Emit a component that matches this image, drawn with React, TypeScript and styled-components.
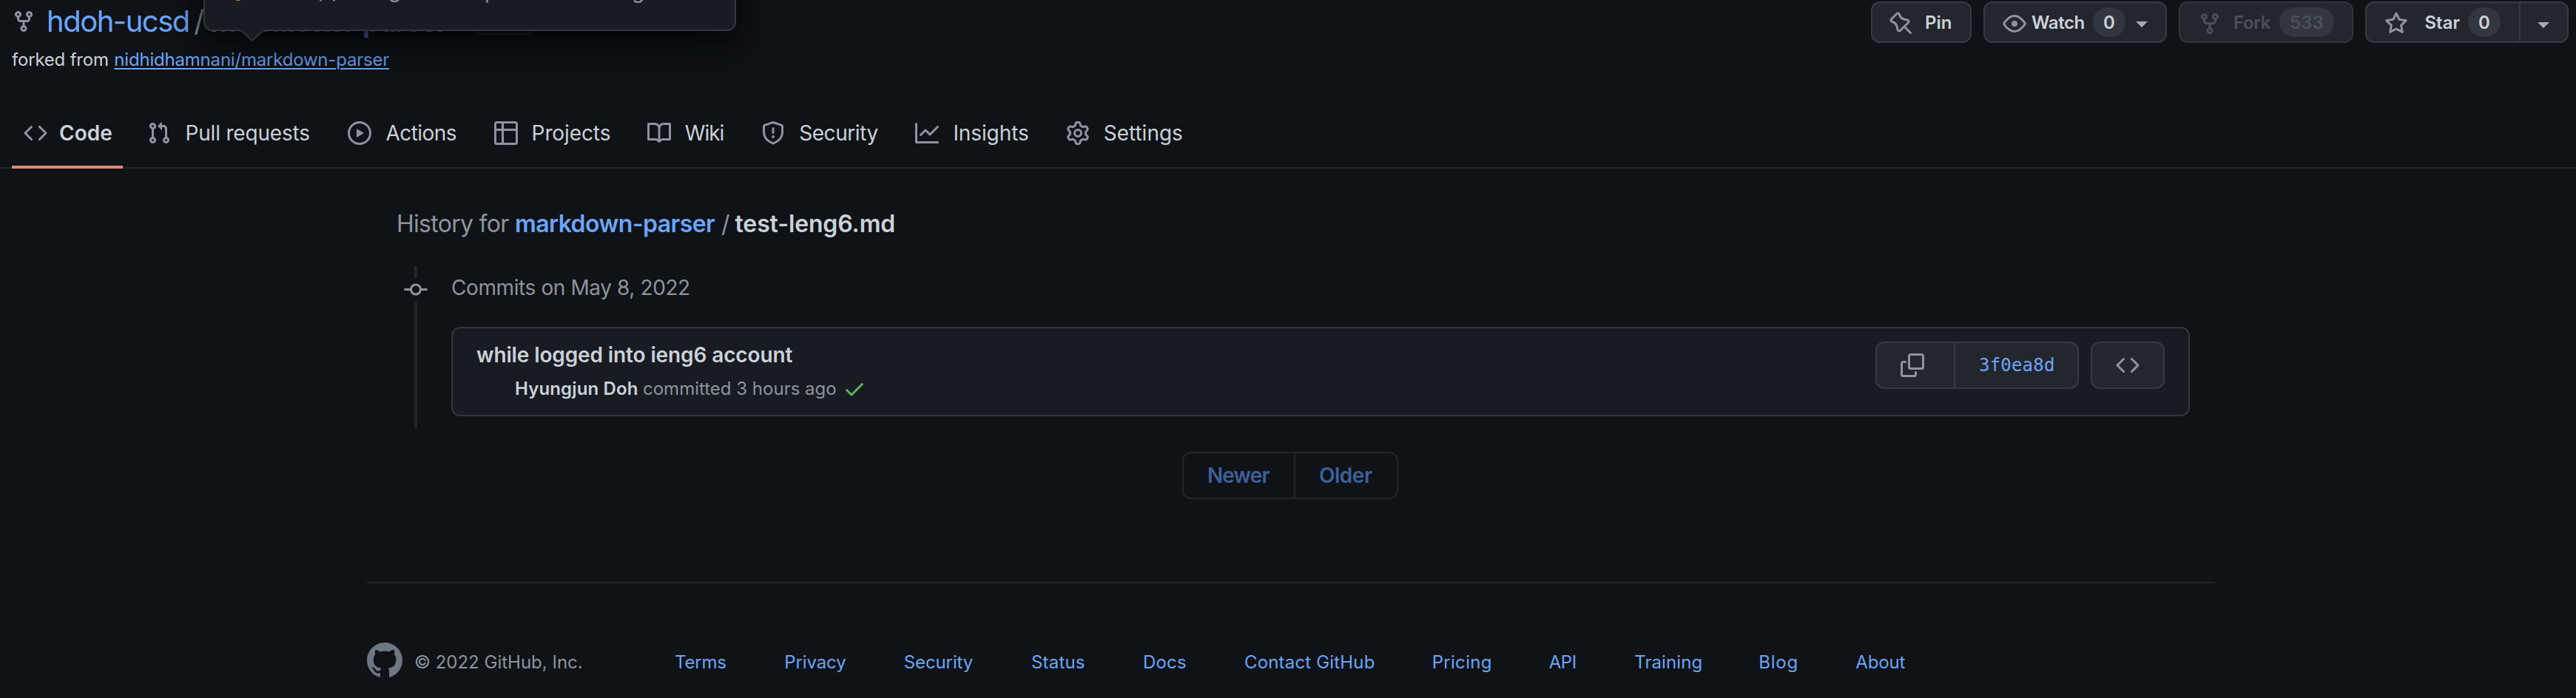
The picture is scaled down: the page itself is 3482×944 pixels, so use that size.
import React from "react";
import styled, { createGlobalStyle } from "styled-components";

const color = {
  canvas: "#0f1216",
  panel: "#181b22",
  button: "#23262d",
  counter: "#32363e",
  border: "#32363b",
  buttonBorder: "#373b41",
  divider: "#22262a",
  text: "#cbd1d8",
  muted: "#8d949e",
  link: "#6ca5f8",
  linkDisabled: "#3e6098",
  disabled: "#4a5058",
  accent: "#e9866c",
  success: "#5bb557",
};

const GlobalStyle = createGlobalStyle`
  body {
    margin: 0;
    background: ${color.canvas};
    color: ${color.text};
    font-family: Inter, "Liberation Sans", sans-serif;
    font-size: 28px;
  }
`;

const icons = {
  fork: "M5 3.25a.75.75 0 11-1.5 0 .75.75 0 011.5 0zm0 2.122a2.25 2.25 0 10-1.5 0v.878A2.25 2.25 0 005.75 8.5h1.5v2.128a2.251 2.251 0 101.5 0V8.5h1.5a2.25 2.25 0 002.25-2.25v-.878a2.25 2.25 0 10-1.5 0v.878a.75.75 0 01-.75.75h-4.5A.75.75 0 015 6.25v-.878zm3.75 7.378a.75.75 0 11-1.5 0 .75.75 0 011.5 0zm3-8.75a.75.75 0 100-1.5.75.75 0 000 1.5z",
  code: "M4.72 3.22a.75.75 0 011.06 1.06L2.06 8l3.72 3.72a.75.75 0 11-1.06 1.06L.47 8.53a.75.75 0 010-1.06l4.25-4.25zm6.56 0a.75.75 0 10-1.06 1.06L13.94 8l-3.72 3.72a.75.75 0 101.06 1.06l4.25-4.25a.75.75 0 000-1.06l-4.25-4.25z",
  pull: "M7.177 3.073L9.573.677A.25.25 0 0110 .854v4.792a.25.25 0 01-.427.177L7.177 3.427a.25.25 0 010-.354zM3.75 2.5a.75.75 0 100 1.5.75.75 0 000-1.5zm-2.25.75a2.25 2.25 0 113 2.122v5.256a2.251 2.251 0 11-1.5 0V5.372A2.25 2.25 0 011.5 3.25zM11 2.5h-1V4h1a1 1 0 011 1v5.628a2.251 2.251 0 101.5 0V5A2.5 2.5 0 0011 2.5zm1 10.25a.75.75 0 111.5 0 .75.75 0 01-1.5 0zM3.75 12a.75.75 0 100 1.5.75.75 0 000-1.5z",
  play: "M1.5 8a6.5 6.5 0 1113 0 6.5 6.5 0 01-13 0zM8 0a8 8 0 100 16A8 8 0 008 0zM6.379 5.227A.25.25 0 006 5.442v5.117a.25.25 0 00.379.214l4.264-2.559a.25.25 0 000-.428L6.379 5.227z",
  table: "M0 1.75C0 .784.784 0 1.75 0h12.5C15.216 0 16 .784 16 1.75v12.5A1.75 1.75 0 0114.25 16H1.75A1.75 1.75 0 010 14.25V1.75zM1.5 6.5v7.75c0 .138.112.25.25.25H5v-8H1.5zM6.5 6.5v8h7.75a.25.25 0 00.25-.25V6.5h-8zM14.5 5V1.75a.25.25 0 00-.25-.25H6.5V5h8zM5 5V1.5H1.75a.25.25 0 00-.25.25V5H5z",
  book: "M0 1.75A.75.75 0 01.75 1h4.253c1.227 0 2.317.59 3 1.501A3.744 3.744 0 0111.006 1h4.245a.75.75 0 01.75.75v10.5a.75.75 0 01-.75.75h-4.507a2.25 2.25 0 00-1.591.659l-.622.621a.75.75 0 01-1.06 0l-.622-.621A2.25 2.25 0 005.258 13H.75a.75.75 0 01-.75-.75V1.75zm8.755 3a2.25 2.25 0 012.25-2.25H14.5v9h-3.757c-.71 0-1.4.201-1.992.572l.004-7.322zm-1.504 7.324l.004-5.073-.002-2.253A2.25 2.25 0 005.003 2.5H1.5v9h3.757a3.75 3.75 0 011.994.574z",
  shield: "M7.467.133a1.75 1.75 0 011.066 0l5.25 1.68A1.75 1.75 0 0115 3.48V7c0 1.566-.32 3.182-1.303 4.682-.983 1.498-2.585 2.813-5.032 3.855a1.7 1.7 0 01-1.33 0c-2.447-1.042-4.049-2.357-5.032-3.855C1.32 10.182 1 8.566 1 7V3.48a1.75 1.75 0 011.217-1.667l5.25-1.68zm.61 1.429a.25.25 0 00-.153 0l-5.25 1.68a.25.25 0 00-.174.238V7c0 1.358.275 2.666 1.057 3.86.784 1.194 2.121 2.34 4.366 3.297a.2.2 0 00.154 0c2.245-.956 3.582-2.104 4.366-3.298C13.225 9.666 13.5 8.36 13.5 7V3.48a.25.25 0 00-.174-.237l-5.25-1.68zM9 10.5a1 1 0 11-2 0 1 1 0 012 0zm-.25-5.75a.75.75 0 10-1.5 0v3a.75.75 0 001.5 0v-3z",
  graph: "M1.5 1.75a.75.75 0 00-1.5 0v12.5c0 .414.336.75.75.75h14.5a.75.75 0 000-1.5H1.5V1.75zm14.28 2.53a.75.75 0 00-1.06-1.06L10 7.94 7.53 5.47a.75.75 0 00-1.06 0L3.22 8.72a.75.75 0 001.06 1.06L7 7.06l2.47 2.47a.75.75 0 001.06 0l5.25-5.25z",
  gear: "M7.429 1.525a6.593 6.593 0 011.142 0c.036.003.108.036.137.146l.289 1.105c.147.56.55.967.997 1.189.174.086.341.183.501.29.417.278.97.423 1.53.27l1.102-.303c.11-.03.175.016.195.046.219.31.41.641.573.989.014.031.022.11-.059.19l-.815.806c-.411.406-.562.957-.53 1.456a4.588 4.588 0 010 .582c-.032.499.119 1.05.53 1.456l.815.806c.08.08.073.159.059.19a6.494 6.494 0 01-.573.99c-.02.029-.086.074-.195.045l-1.103-.303c-.559-.153-1.112-.008-1.529.27-.16.107-.327.204-.5.29-.449.222-.851.628-.998 1.189l-.289 1.105c-.029.11-.101.143-.137.146a6.613 6.613 0 01-1.142 0c-.036-.003-.108-.037-.137-.146l-.289-1.105c-.147-.56-.55-.967-.997-1.189a4.502 4.502 0 01-.501-.29c-.417-.278-.97-.423-1.53-.27l-1.102.303c-.11.03-.175-.016-.195-.046a6.492 6.492 0 01-.573-.989c-.014-.031-.022-.11.059-.19l.815-.806c.411-.406.562-.957.53-1.456a4.587 4.587 0 010-.582c.032-.499-.119-1.05-.53-1.456l-.815-.806c-.08-.08-.073-.159-.059-.19a6.44 6.44 0 01.573-.99c.02-.029.086-.075.195-.045l1.103.303c.559.153 1.112.008 1.529-.27.16-.107.327-.204.5-.29.449-.222.851-.628.998-1.189l.289-1.105c.029-.11.101-.143.137-.146zM8 0c-.236 0-.47.01-.701.03-.743.065-1.29.615-1.458 1.261l-.29 1.106c-.017.066-.078.158-.211.224a5.994 5.994 0 00-.668.386c-.123.082-.233.09-.3.071L3.27 2.776c-.644-.177-1.392.02-1.82.63a7.977 7.977 0 00-.704 1.217c-.315.675-.111 1.422.363 1.891l.815.806c.05.048.098.147.088.294a6.084 6.084 0 000 .772c.01.147-.038.246-.088.294l-.815.806c-.474.469-.678 1.216-.363 1.891.2.428.436.835.704 1.218.428.609 1.176.806 1.82.63l1.103-.303c.066-.019.176-.011.299.071.213.143.436.272.668.386.133.066.194.158.212.224l.289 1.106c.169.646.715 1.196 1.458 1.26a8.094 8.094 0 001.402 0c.743-.064 1.29-.614 1.458-1.26l.29-1.106c.017-.066.078-.158.211-.224a5.98 5.98 0 00.668-.386c.123-.082.233-.09.3-.071l1.102.302c.644.177 1.392-.02 1.82-.63.268-.382.505-.789.704-1.217.315-.675.111-1.422-.364-1.891l-.814-.806c-.05-.048-.098-.147-.088-.294a6.1 6.1 0 000-.772c-.01-.147.039-.246.088-.294l.814-.806c.475-.469.679-1.216.364-1.891a7.992 7.992 0 00-.704-1.218c-.428-.609-1.176-.806-1.82-.63l-1.103.303c-.066.019-.176.011-.299-.071a5.991 5.991 0 00-.668-.386c-.133-.066-.194-.158-.212-.224L10.16 1.29C9.99.645 9.444.095 8.701.031A8.094 8.094 0 008 0zm1.5 8a1.5 1.5 0 11-3 0 1.5 1.5 0 013 0zM11 8a3 3 0 11-6 0 3 3 0 016 0z",
  pin: "M4.456.734a1.75 1.75 0 012.826.504l.613 1.327a3.081 3.081 0 002.084 1.707l2.454.584c1.332.317 1.8 1.972.832 2.94L11.06 10l3.72 3.72a.75.75 0 11-1.061 1.06L10 11.06l-2.204 2.205c-.968.968-2.623.5-2.94-.832l-.584-2.454a3.081 3.081 0 00-1.707-2.084l-1.327-.613a1.75 1.75 0 01-.504-2.826L4.456.734zM5.92 1.866a.25.25 0 00-.404-.072L1.794 5.516a.25.25 0 00.072.404l1.328.613A4.582 4.582 0 015.73 9.63l.584 2.454a.25.25 0 00.42.12l5.47-5.47a.25.25 0 00-.12-.42L9.63 5.73a4.581 4.581 0 01-3.098-2.537L5.92 1.866z",
  eye: "M1.679 7.932c.412-.621 1.242-1.75 2.366-2.717C5.175 4.242 6.527 3.5 8 3.5c1.473 0 2.824.742 3.955 1.715 1.124.967 1.954 2.096 2.366 2.717a.119.119 0 010 .136c-.412.621-1.242 1.75-2.366 2.717C10.825 11.758 9.473 12.5 8 12.5c-1.473 0-2.824-.742-3.955-1.715C2.92 9.818 2.09 8.69 1.679 8.068a.119.119 0 010-.136zM8 2c-1.981 0-3.67.992-4.933 2.078C1.797 5.169.88 6.423.43 7.1a1.619 1.619 0 000 1.798c.45.678 1.367 1.932 2.637 3.024C4.329 13.008 6.019 14 8 14c1.981 0 3.67-.992 4.933-2.078 1.27-1.091 2.187-2.345 2.637-3.023a1.619 1.619 0 000-1.798c-.45-.678-1.367-1.932-2.637-3.023C11.671 2.992 9.981 2 8 2zm0 8a2 2 0 100-4 2 2 0 000 4z",
  star: "M8 .25a.75.75 0 01.673.418l1.882 3.815 4.21.612a.75.75 0 01.416 1.279l-3.046 2.97.719 4.192a.75.75 0 01-1.088.791L8 12.347l-3.766 1.98a.75.75 0 01-1.088-.79l.72-4.194L.818 6.374a.75.75 0 01.416-1.28l4.21-.611L7.327.668A.75.75 0 018 .25zm0 2.445L6.615 5.5a.75.75 0 01-.564.41l-3.097.45 2.24 2.184a.75.75 0 01.216.664l-.528 3.084 2.769-1.456a.75.75 0 01.698 0l2.77 1.456-.53-3.084a.75.75 0 01.216-.664l2.24-2.183-3.096-.45a.75.75 0 01-.564-.41L8 2.694v.001z",
  copy: "M0 6.75C0 5.784.784 5 1.75 5h1.5a.75.75 0 010 1.5h-1.5a.25.25 0 00-.25.25v7.5c0 .138.112.25.25.25h7.5a.25.25 0 00.25-.25v-1.5a.75.75 0 011.5 0v1.5A1.75 1.75 0 019.25 16h-7.5A1.75 1.75 0 010 14.25v-7.5zM5 1.75C5 .784 5.784 0 6.75 0h7.5C15.216 0 16 .784 16 1.75v7.5A1.75 1.75 0 0114.25 11h-7.5A1.75 1.75 0 015 9.25v-7.5zm1.75-.25a.25.25 0 00-.25.25v7.5c0 .138.112.25.25.25h7.5a.25.25 0 00.25-.25v-7.5a.25.25 0 00-.25-.25h-7.5z",
  commit: "M10.5 7.75a2.5 2.5 0 11-5 0 2.5 2.5 0 015 0zm1.43.75a4.002 4.002 0 01-7.86 0H.75a.75.75 0 110-1.5h3.32a4.001 4.001 0 017.86 0h3.32a.75.75 0 110 1.5h-3.32z",
  check: "M13.78 4.22a.75.75 0 010 1.06l-7.25 7.25a.75.75 0 01-1.06 0L2.22 9.28a.75.75 0 011.06-1.06L6 10.94l6.72-6.72a.75.75 0 011.06 0z",
  mark: "M8 0C3.58 0 0 3.58 0 8c0 3.54 2.29 6.53 5.47 7.59.4.07.55-.17.55-.38 0-.19-.01-.82-.01-1.49-2.01.37-2.53-.49-2.69-.94-.09-.23-.48-.94-.82-1.13-.28-.15-.68-.52-.01-.53.63-.01 1.08.58 1.23.82.72 1.21 1.87.87 2.33.66.07-.52.28-.87.51-1.07-1.78-.2-3.64-.89-3.64-3.95 0-.87.31-1.59.82-2.15-.08-.2-.36-1.02.08-2.12 0 0 .67-.21 2.2.82.64-.18 1.32-.27 2-.27.68 0 1.36.09 2 .27 1.53-1.04 2.2-.82 2.2-.82.44 1.1.16 1.92.08 2.12.51.56.82 1.27.82 2.15 0 3.07-1.87 3.75-3.65 3.95.29.25.54.73.54 1.48 0 1.07-.01 1.93-.01 2.2 0 .21.15.46.55.38A8.013 8.013 0 0016 8c0-4.42-3.58-8-8-8z",
};

type IconName = keyof typeof icons;

const Svg = styled.svg<{ $size: number }>`
  flex: none;
  display: block;
  width: ${(p) => p.$size}px;
  height: ${(p) => p.$size}px;
  fill: currentColor;
`;

function Icon({ name, size = 32 }: { name: IconName; size?: number }) {
  return (
    <Svg viewBox="0 0 16 16" $size={size} aria-hidden="true">
      <path fillRule="evenodd" d={icons[name]} />
    </Svg>
  );
}

const Page = styled.div`
  height: 944px;
  overflow: hidden;
`;

/* Repository header */

const Header = styled.header`
  display: flex;
  justify-content: space-between;
  align-items: flex-start;
  padding: 0 10px 0 16px;
  height: 132px;
`;

const TitleRow = styled.div`
  display: flex;
  align-items: center;
  height: 57px;
  font-size: 40px;
  color: ${color.muted};
`;

const Owner = styled.a`
  width: 199px;
  margin-left: 15px;
  color: ${color.link};
  letter-spacing: -1.5px;
  white-space: nowrap;
`;

const Slash = styled.span`
  width: 22px;
`;

const RepoName = styled.a`
  width: 349px;
  color: ${color.link};
  font-weight: 600;
  letter-spacing: -1.9px;
  white-space: nowrap;
`;

const Visibility = styled.span`
  box-sizing: border-box;
  width: 94px;
  height: 40px;
  margin-top: -3px;
  border: 2px solid ${color.border};
  border-radius: 20px;
  color: ${color.muted};
  font-size: 24px;
  font-weight: 500;
  line-height: 34px;
  text-align: center;
`;

const ForkedFrom = styled.div`
  margin: 8px 0 0;
  font-size: 24px;
  line-height: 31px;
  letter-spacing: -0.2px;

  a {
    margin-left: 1px;
    color: ${color.link};
    text-decoration: underline;
    text-decoration-thickness: 2px;
    text-underline-offset: 3px;
  }
`;

const Actions = styled.div`
  display: flex;
  gap: 16px;
  padding-top: 2px;
`;

const Button = styled.div<{ $width: number; $disabled?: boolean }>`
  box-sizing: border-box;
  display: flex;
  align-items: center;
  width: ${(p) => p.$width}px;
  height: 56px;
  border: 2px solid ${(p) => (p.$disabled ? color.border : color.buttonBorder)};
  border-radius: 12px;
  background: ${color.button};
  color: ${(p) => (p.$disabled ? color.disabled : color.text)};
  font-size: 24px;
  font-weight: 600;
  line-height: 25px;
  white-space: nowrap;
`;

const ButtonIcon = styled.span<{ $left: number; $gap: number; $disabled?: boolean }>`
  margin: 4px ${(p) => p.$gap}px 0 ${(p) => p.$left}px;
  color: ${(p) => (p.$disabled ? color.disabled : color.muted)};
`;

const ButtonText = styled.span<{ $width: number; $spacing?: number }>`
  width: ${(p) => p.$width}px;
  letter-spacing: ${(p) => p.$spacing ?? 0}px;
`;

const Counter = styled.span<{ $width: number }>`
  width: ${(p) => p.$width}px;
  height: 40px;
  border-radius: 20px;
  background: ${color.counter};
  line-height: 41px;
  letter-spacing: 0.2px;
  text-align: center;
`;

const Caret = styled.span<{ $left: number; $top: number }>`
  margin: ${(p) => p.$top}px 0 0 ${(p) => p.$left}px;
  border: 8px solid transparent;
  border-top-color: #a4abb5;
  border-bottom: 0;
`;

const StarMain = styled.div`
  display: flex;
  align-items: center;
  width: 206px;
  height: 100%;
  border-right: 2px solid ${color.buttonBorder};
`;

/* Hover card over the repository name */

const HoverCard = styled.div`
  position: absolute;
  top: -60px;
  left: 275px;
  box-sizing: border-box;
  width: 720px;
  height: 102px;
  border: 2px solid ${color.border};
  border-radius: 12px;
  background: ${color.panel};
  box-shadow: 0 16px 48px #010409;
`;

const HoverCardText = styled.div`
  display: flex;
  padding: 29px 0 0 38px;
  color: ${color.muted};
  font-size: 28px;
  line-height: 34px;
`;

const StatusDot = styled.span`
  width: 14px;
  height: 14px;
  margin: 16px 101px 0 0;
  border-radius: 50%;
  background: #c9963f;
`;

const Glyph = styled.span<{ $width: number; $raise?: number }>`
  width: ${(p) => p.$width}px;
  margin-top: ${(p) => -(p.$raise ?? 0)}px;
`;

const HoverCardTip = styled.svg`
  position: absolute;
  top: 98px;
  left: 49px;
  width: 30px;
  height: 16px;
`;

/* Tabs */

const Tabs = styled.nav`
  box-sizing: border-box;
  display: flex;
  height: 96px;
  padding-left: 16px;
  border-bottom: 2px solid ${color.divider};
`;

const Tab = styled.a<{ $width: number; $selected?: boolean }>`
  box-sizing: border-box;
  display: flex;
  align-items: center;
  width: ${(p) => p.$width}px;
  height: 96px;
  padding-left: 16px;
  color: ${color.muted};
  background: ${(p) =>
    p.$selected ? `linear-gradient(${color.accent}, ${color.accent}) 0 100% / 150px 4px no-repeat` : "none"};
`;

const TabLabel = styled.span<{ $gap: number; $spacing: number; $selected?: boolean }>`
  margin-left: ${(p) => p.$gap}px;
  color: ${color.text};
  font-weight: ${(p) => (p.$selected ? 600 : 400)};
  line-height: 34px;
  letter-spacing: ${(p) => p.$spacing}px;
  white-space: nowrap;
`;

const tabs: { icon: IconName; label: string; width: number; gap: number; spacing: number }[] = [
  { icon: "code", label: "Code", width: 167, gap: 16, spacing: 0 },
  { icon: "pull", label: "Pull requests", width: 271, gap: 19.5, spacing: -0.19 },
  { icon: "play", label: "Actions", width: 198, gap: 19.5, spacing: -0.55 },
  { icon: "table", label: "Projects", width: 207, gap: 18.6, spacing: -0.1 },
  { icon: "book", label: "Wiki", width: 154, gap: 18.8, spacing: -1 },
  { icon: "shield", label: "Security", width: 208, gap: 19.2, spacing: -0.43 },
  { icon: "graph", label: "Insights", width: 204, gap: 19.4, spacing: -0.1 },
  { icon: "gear", label: "Settings", width: 200, gap: 18.7, spacing: 0 },
];

/* History */

const Container = styled.main`
  width: 2496px;
  margin-left: 496px;
`;

const HistoryTitle = styled.h1`
  display: flex;
  margin: 55px 0 0 40px;
  color: ${color.muted};
  font-size: 32px;
  font-weight: 400;
  line-height: 40px;
  white-space: nowrap;
`;

const TitlePart = styled.span<{ $width: number; $spacing: number; $tone?: string; $bold?: boolean }>`
  width: ${(p) => p.$width}px;
  color: ${(p) => p.$tone ?? color.muted};
  font-weight: ${(p) => (p.$bold ? 600 : 400)};
  letter-spacing: ${(p) => p.$spacing}px;
`;

const Timeline = styled.section`
  display: flex;
  height: 219px;
  margin: 37px 32px 0 50px;
`;

const Rail = styled.div`
  display: flex;
  flex-direction: column;
  align-items: center;
  width: 32px;
  margin-right: 32px;
  color: ${color.muted};
`;

const RailLine = styled.span<{ $height: number }>`
  width: 4px;
  height: ${(p) => p.$height}px;
  background: ${color.divider};
`;

const Day = styled.div`
  flex: 1;
`;

const DayTitle = styled.h2`
  margin: 0;
  color: ${color.muted};
  font-size: 28px;
  font-weight: 400;
  line-height: 59px;
  letter-spacing: -0.4px;
`;

const CommitCard = styled.article`
  box-sizing: border-box;
  display: flex;
  justify-content: space-between;
  height: 121px;
  margin-top: 23px;
  padding: 0 32px;
  border: 2px solid ${color.border};
  border-radius: 12px;
  background: ${color.panel};
`;

const CommitInfo = styled.div`
  padding-top: 16px;
`;

const CommitTitle = styled.div`
  font-weight: 600;
  line-height: 40px;
  letter-spacing: -0.12px;
`;

const CommitMeta = styled.div`
  display: flex;
  align-items: center;
  height: 51px;
  padding-left: 52px;
  color: ${color.muted};
  font-size: 24px;
`;

const Author = styled.span`
  width: 173px;
  color: ${color.text};
  font-weight: 600;
  letter-spacing: 0.12px;
`;

const Committed = styled.span`
  width: 270px;
`;

const Passed = styled.span`
  color: ${color.success};
`;

const CommitActions = styled.div`
  display: flex;
  gap: 16px;
  padding-top: 18px;
`;

const ButtonBox = styled.div`
  box-sizing: border-box;
  display: flex;
  height: 64px;
  border: 2px solid ${color.buttonBorder};
  border-radius: 12px;
  background: ${color.button};
  color: ${color.muted};
`;

const Cell = styled.div<{ $width: number; $left: number; $divided?: boolean }>`
  box-sizing: border-box;
  display: flex;
  align-items: center;
  width: ${(p) => p.$width}px;
  padding-left: ${(p) => p.$left}px;
  border-right: ${(p) => (p.$divided ? `2px solid ${color.buttonBorder}` : "0")};
`;

const Sha = styled.a`
  color: ${color.link};
  font-family: "DejaVu Sans Mono", monospace;
  font-size: 24px;
  letter-spacing: 0.2px;
`;

const Pager = styled.div`
  box-sizing: border-box;
  display: flex;
  width: 292px;
  height: 64px;
  margin: 32px auto 0;
  border: 2px solid ${color.divider};
  border-radius: 12px;
  color: ${color.linkDisabled};
  font-weight: 600;
`;

const PagerItem = styled.span<{ $width: number; $spacing: number; $divided?: boolean }>`
  box-sizing: border-box;
  width: ${(p) => p.$width}px;
  padding-left: 32px;
  border-right: ${(p) => (p.$divided ? `2px solid ${color.divider}` : "0")};
  line-height: 60px;
  letter-spacing: ${(p) => p.$spacing}px;
`;

/* Footer */

const Footer = styled.footer`
  display: flex;
  width: 2498px;
  margin: 112px 0 0 496px;
  padding-top: 80px;
  border-top: 2px solid ${color.divider};
  color: ${color.muted};
  font-size: 24px;
  line-height: 53px;
  white-space: nowrap;
`;

const Mark = styled.a`
  color: #6e7681;
`;

const Copyright = styled.span`
  width: 352px;
  margin-left: 16px;
`;

const FooterLink = styled.a<{ $width: number; $spacing: number }>`
  width: ${(p) => p.$width}px;
  color: ${color.link};
  letter-spacing: ${(p) => p.$spacing}px;
`;

const footerLinks: [string, number, number][] = [
  ["Terms", 148.2, -0.2],
  ["Privacy", 161.5, -0.1],
  ["Security", 172.3, -0.1],
  ["Status", 151, 0.2],
  ["Docs", 137, 0.2],
  ["Contact GitHub", 253.7, 0.17],
  ["Pricing", 158, 0.3],
  ["API", 115.5, -0.4],
  ["Training", 168, 0.1],
  ["Blog", 131.2, 0.8],
  ["About", 70, -0.2],
];

export default function App() {
  return (
    <>
      <GlobalStyle />
      <Page>
        <Header>
          <div>
            <TitleRow>
              <Icon name="fork" />
              <Owner>hdoh-ucsd</Owner>
              <Slash>/</Slash>
              <RepoName>markdown-parser</RepoName>
              <Visibility>Public</Visibility>
            </TitleRow>
            <ForkedFrom>
              forked from <a>nidhidhamnani/markdown-parser</a>
            </ForkedFrom>
          </div>
          <Actions>
            <Button $width={136}>
              <ButtonIcon $left={23} $gap={16}>
                <Icon name="pin" />
              </ButtonIcon>
              <ButtonText $width={40}>Pin</ButtonText>
            </Button>
            <Button $width={248}>
              <ButtonIcon $left={24} $gap={7}>
                <Icon name="eye" />
              </ButtonIcon>
              <ButtonText $width={83} $spacing={-0.4}>Watch</ButtonText>
              <Counter $width={44}>0</Counter>
              <Caret $left={14} $top={6} />
            </Button>
            <Button $width={236} $disabled>
              <ButtonIcon $left={24} $gap={16} $disabled>
                <Icon name="fork" />
              </ButtonIcon>
              <ButtonText $width={62} $spacing={-0.4}>Fork</ButtonText>
              <Counter $width={74}>533</Counter>
            </Button>
            <Button $width={275}>
              <StarMain>
                <ButtonIcon $left={24} $gap={22.5}>
                  <Icon name="star" />
                </ButtonIcon>
                <ButtonText $width={58.5} $spacing={0}>Star</ButtonText>
                <Counter $width={44}>0</Counter>
              </StarMain>
              <Caret $left={23} $top={8} />
            </Button>
          </Actions>
        </Header>

        <Tabs>
          {tabs.map((tab, i) => (
            <Tab key={tab.label} $width={tab.width} $selected={i === 0}>
              <Icon name={tab.icon} />
              <TabLabel $gap={tab.gap} $spacing={tab.spacing} $selected={i === 0}>
                {tab.label}
              </TabLabel>
            </Tab>
          ))}
        </Tabs>

        <Container>
          <HistoryTitle>
            <TitlePart $width={160} $spacing={-0.72}>History for</TitlePart>
            <TitlePart $width={279} $spacing={-0.57} $tone={color.link} $bold>markdown-parser</TitlePart>
            <TitlePart $width={18.5} $spacing={0}>/</TitlePart>
            <TitlePart $width={220} $spacing={-0.14} $tone={color.text} $bold>test-leng6.md</TitlePart>
          </HistoryTitle>

          <Timeline>
            <Rail>
              <RailLine $height={16} />
              <Icon name="commit" />
              <RailLine $height={171} />
            </Rail>
            <Day>
              <DayTitle>Commits on May 8, 2022</DayTitle>
              <CommitCard>
                <CommitInfo>
                  <CommitTitle>while logged into ieng6 account</CommitTitle>
                  <CommitMeta>
                    <Author>Hyungjun Doh</Author>
                    <Committed>committed 3 hours ago</Committed>
                    <Passed>
                      <Icon name="check" />
                    </Passed>
                  </CommitMeta>
                </CommitInfo>
                <CommitActions>
                  <ButtonBox>
                    <Cell $width={106} $left={32} $divided>
                      <Icon name="copy" />
                    </Cell>
                    <Cell $width={165} $left={32}>
                      <Sha>3f0ea8d</Sha>
                    </Cell>
                  </ButtonBox>
                  <ButtonBox>
                    <Cell $width={96} $left={32}>
                      <Icon name="code" />
                    </Cell>
                  </ButtonBox>
                </CommitActions>
              </CommitCard>
            </Day>
          </Timeline>

          <Pager>
            <PagerItem $width={151} $spacing={-0.9} $divided>Newer</PagerItem>
            <PagerItem $width={137} $spacing={-0.5}>Older</PagerItem>
          </Pager>
        </Container>

        <Footer>
          <Mark>
            <Icon name="mark" size={48} />
          </Mark>
          <Copyright>© 2022 GitHub, Inc.</Copyright>
          {footerLinks.map(([label, width, spacing]) => (
            <FooterLink key={label} $width={width} $spacing={spacing}>
              {label}
            </FooterLink>
          ))}
        </Footer>
      </Page>

      <HoverCard>
        <HoverCardText>
          <StatusDot />
          <Glyph $width={18} $raise={2}>p</Glyph>
          <Glyph $width={77} $raise={2}>p</Glyph>
          <Glyph $width={130} $raise={1}>g</Glyph>
          <Glyph $width={199}>p</Glyph>
          <Glyph $width={20}>g</Glyph>
        </HoverCardText>
        <HoverCardTip viewBox="0 0 30 16">
          <path d="M0 0h30v2h-1L15 15 1 2H0z" fill={color.panel} />
          <path d="M1 2L15 15 29 2" fill="none" stroke={color.border} strokeWidth="2" />
        </HoverCardTip>
      </HoverCard>
    </>
  );
}
